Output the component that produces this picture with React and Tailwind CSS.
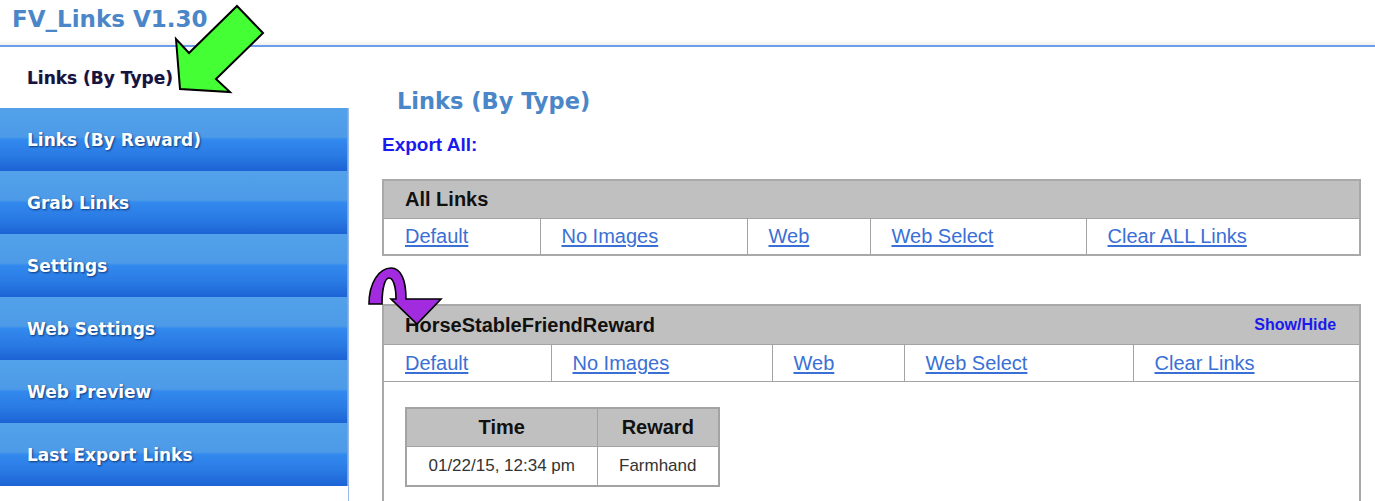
import React from 'react';

// sidebar entries under the active tab
const navItems = ['Links (By Reward)', 'Grab Links', 'Settings', 'Web Settings', 'Web Preview', 'Last Export Links'];

const allLinksCols = [
  { label: 'Default', w: 'w-[157px]' },
  { label: 'No Images', w: 'w-[207px]' },
  { label: 'Web', w: 'w-[123px]' },
  { label: 'Web Select', w: 'w-[216px]' },
  { label: 'Clear ALL Links', w: 'w-[274px]' },
];

const rewardCols = [
  { label: 'Default', w: 'w-[168px]' },
  { label: 'No Images', w: 'w-[221px]' },
  { label: 'Web', w: 'w-[132px]' },
  { label: 'Web Select', w: 'w-[229px]' },
  { label: 'Clear Links', w: 'w-[227px]' },
];

const verdana = "font-['DejaVu_Sans',Verdana,sans-serif]";
const arial = "font-['Liberation_Sans',Arial,sans-serif]";

function LinkRow({ cols, height }) {
  return (
    <tr className={height}>
      {cols.map((c) => (
        <td key={c.label} className="border border-[#a3a3a3] pl-[21px] align-middle">
          <a href="#" className="text-[20px] text-[#3a70d5] underline underline-offset-2">
            {c.label}
          </a>
        </td>
      ))}
    </tr>
  );
}

function GreenArrow() {
  return (
    <svg className="absolute left-[170px] top-0" width="100" height="100" viewBox="0 0 100 100">
      <polygon
        points="10,89 6,39 19,53 67,6 93,33 46,79 60,92"
        fill="#44ff33"
        stroke="#000"
        strokeWidth="2"
        strokeLinejoin="miter"
      />
    </svg>
  );
}

function PurpleArrow() {
  return (
    <svg className="absolute left-[365px] top-[265px]" width="80" height="62" viewBox="0 0 80 62">
      <path
        d="M4,39 C4,18 14,3 26,3 C36,3 41,15 41,34 L76,34 L52,59 L26,34 L31,34 C31,21 28,13 24,13 C20,13 17,23 17,39 Z"
        fill="#a22be0"
        stroke="#000"
        strokeWidth="1.6"
      />
    </svg>
  );
}

export default function App() {
  return (
    <div className="relative h-screen overflow-hidden bg-white">
      <header className="h-[45px] flex items-center pl-3 pb-[6px] shadow-[inset_0_-6px_6px_-6px_rgba(0,0,0,0.12)]">
        <h1 className={`${verdana} font-bold text-[23px] text-[#4a86c8] leading-none`}>FV_Links V1.30</h1>
      </header>
      <div className="h-[2px] bg-[#6b9de8]" />

      <div className="flex h-[454px]">
        <aside className={`${verdana} w-[349px] shrink-0 flex flex-col font-bold text-[17px]`}>
          <div className="h-[61px] shrink-0 flex items-center pl-[27px] pt-[3px] text-[#14143f] [text-shadow:0_0_1px_rgba(80,0,80,0.35)]">
            Links (By Type)
          </div>
          <div className="flex-1 border-r border-[#9cb8e4]">
            {navItems.map((item) => (
              <div
                key={item}
                className="h-[63px] flex items-center pl-[27px] pt-[3px] text-white border-r border-[#6aa8ef] bg-[linear-gradient(to_bottom,#52a1ea_0%,#4d9be8_46%,#3289ee_50%,#2a7be4_75%,#1c63d5_100%)] [text-shadow:1px_1px_2px_rgba(10,30,80,0.75)]"
              >
                {item}
              </div>
            ))}
          </div>
        </aside>

        <main className="flex-1 pl-[33px] pr-4">
          <h2 className={`${verdana} font-bold text-[22.5px] leading-[30px] text-[#4a86c8] pt-[39px] pl-[15px]`}>
            Links (By Type)
          </h2>
          <div className={`${arial} font-bold text-[19px] leading-[24px] text-[#1a1aee] mt-[17px]`}>Export All:</div>

          <table className={`${arial} w-full table-fixed border-collapse border-2 border-[#a9a9a9] mt-[22px]`}>
            <colgroup>
              {allLinksCols.map((c) => (
                <col key={c.label} className={c.w} />
              ))}
            </colgroup>
            <tbody>
              <tr className="h-[38px] bg-[#c0c0c0]">
                <td colSpan={5} className="border border-[#a3a3a3] pl-[21px] font-bold text-[20px] text-[#111]">
                  All Links
                </td>
              </tr>
              <LinkRow cols={allLinksCols} height="h-[37px]" />
            </tbody>
          </table>

          <table className={`${arial} w-full table-fixed border-collapse border-2 border-[#a9a9a9] mt-[48px]`}>
            <colgroup>
              {rewardCols.map((c) => (
                <col key={c.label} className={c.w} />
              ))}
            </colgroup>
            <tbody>
              <tr className="h-[39px] bg-[#c0c0c0]">
                <td colSpan={5} className="border border-[#a3a3a3] px-[21px]">
                  <div className="flex items-center justify-between">
                    <span className="font-bold text-[20px] text-[#111]">HorseStableFriendReward</span>
                    <a href="#" className="font-bold text-[16px] text-[#1a1aee] mr-[2px]">Show/Hide</a>
                  </div>
                </td>
              </tr>
              <LinkRow cols={rewardCols} height="h-[37px]" />
              <tr>
                <td colSpan={5} className="border border-[#a3a3a3] pt-[25px] pb-5 pl-[21px]">
                  <table className="border-collapse border-2 border-[#a3a3a3]">
                    <thead>
                      <tr className="h-[39px] bg-[#c0c0c0]">
                        <th className="w-[191px] border border-[#a3a3a3] font-bold text-[20px] text-[#111]">Time</th>
                        <th className="w-[122px] border border-[#a3a3a3] font-bold text-[20px] text-[#111]">Reward</th>
                      </tr>
                    </thead>
                    <tbody>
                      <tr className="h-[39px]">
                        <td className="border border-[#a3a3a3] text-center text-[17px] text-[#333]">01/22/15, 12:34 pm</td>
                        <td className="border border-[#a3a3a3] text-center text-[17px] text-[#333]">Farmhand</td>
                      </tr>
                    </tbody>
                  </table>
                </td>
              </tr>
            </tbody>
          </table>
        </main>
      </div>

      <GreenArrow />
      <PurpleArrow />
    </div>
  );
}
